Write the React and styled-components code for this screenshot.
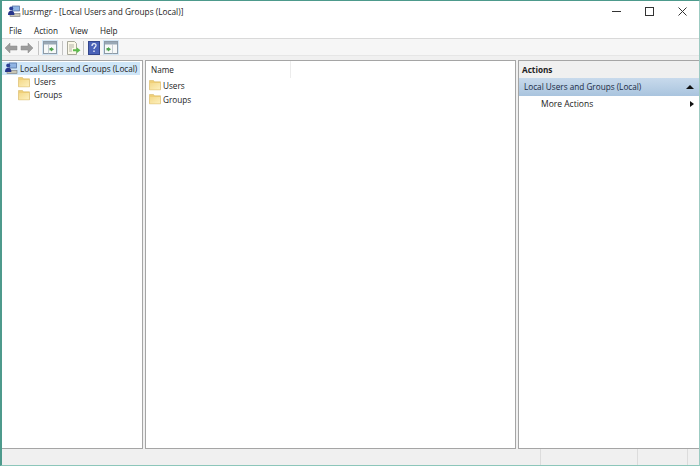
import React from "react";
import styled, { createGlobalStyle } from "styled-components";

const GlobalStyle = createGlobalStyle`
  * {
    box-sizing: border-box;
  }
  html, body {
    margin: 0;
    padding: 0;
    background: #f0f0f0;
  }
  body {
    font-family: "Open Sans", "Noto Sans", sans-serif;
    font-size: 8.2px;
    color: #222;
  }
`;

const Win = styled.div`
  width: 700px;
  height: 466px;
  display: flex;
  flex-direction: column;
  border: 1px solid #4d9a8c;
  border-right-color: #9ccbc2;
  border-left-width: 2px;
  border-bottom-color: #8cc6ba;
  background: #f0f0f0;
  overflow: hidden;
`;

const TitleBar = styled.div`
  height: 21px;
  flex: none;
  display: flex;
  align-items: center;
  padding-left: 5px;
  background: #fff;
`;

const TitleText = styled.span`
  margin-left: 1px;
  flex: 1;
  font-size: 8.3px;
`;

const WinButton = styled.div`
  width: 33px;
  height: 21px;
  display: flex;
  align-items: center;
  justify-content: center;
`;

const MenuBar = styled.div`
  height: 16px;
  flex: none;
  display: flex;
  align-items: center;
  gap: 12px;
  padding-left: 7px;
  background: #fff;
`;

const ToolBar = styled.div`
  height: 18px;
  flex: none;
  display: flex;
  align-items: center;
  padding: 1px 0 0 1px;
  background: #f6f6f6;
  border-top: 1px solid #d9d9d9;
  border-bottom: 1px solid #e6e6e6;
`;

const ToolButton = styled.div`
  width: 16px;
  height: 15px;
  display: flex;
  align-items: center;
  justify-content: center;
  margin-left: ${(p) => p.$ml || 0}px;
  background: ${(p) => (p.$on ? "#d3e6f5" : "transparent")};
`;

const ToolSep = styled.div`
  width: 1px;
  height: 14px;
  background: #c4c4c4;
  margin: 0 ${(p) => p.$r}px 0 ${(p) => p.$l}px;
`;

const Panes = styled.div`
  flex: 1;
  min-height: 0;
  display: flex;
  gap: 2px;
  padding-top: 4px;
`;

const Pane = styled.div`
  width: ${(p) => p.$w}px;
  flex: ${(p) => (p.$grow ? 1 : "none")};
  background: #fff;
  border: 1px solid #a5a5a5;
  border-left-width: ${(p) => (p.$noLeft ? 0 : 1)}px;
  border-right-width: ${(p) => (p.$noRight ? 0 : 1)}px;
  overflow: hidden;
`;

const TreeRoot = styled.div`
  display: flex;
  align-items: center;
  height: 13px;
  margin-top: 1px;
  padding-left: 2px;
  background: #cfe6f8;
  gap: 2px;
  width: 138px;
  white-space: nowrap;
`;

const TreeItem = styled.div`
  display: flex;
  align-items: center;
  height: 13px;
  padding-left: 16px;
  gap: 4px;
`;

const ListHead = styled.div`
  height: 17px;
  display: flex;
  align-items: center;
`;

const HeadCell = styled.div`
  width: 145px;
  height: 17px;
  padding-left: 5px;
  line-height: 18px;
  border-right: 1px solid #ececec;
`;

const ListRow = styled.div`
  display: flex;
  align-items: center;
  height: 14px;
  padding-left: 3px;
  gap: 2px;
`;

const ActionsTitle = styled.div`
  height: 17px;
  display: flex;
  align-items: center;
  padding-left: 3px;
  font-weight: 700;
  background: #f0f0f0;
`;

const ActionsGroup = styled.div`
  height: 18px;
  display: flex;
  align-items: center;
  justify-content: space-between;
  padding: 0 5px 1px;
  color: #1a2a44;
  background: linear-gradient(#c8daec, #a9c4de);
`;

const ActionsRow = styled.div`
  height: 16px;
  display: flex;
  align-items: center;
  justify-content: space-between;
  padding: 0 5px 1px 22px;
  font-size: 8.5px;
`;

const Tri = styled.span`
  width: 0;
  height: 0;
  border-style: solid;
  border-color: transparent;
  ${(p) =>
    p.$up
      ? "border-width: 0 4px 4px 4px; border-bottom-color: #111;"
      : "border-width: 3.5px 0 3.5px 4px; border-left-color: #111;"}
`;

const StatusBar = styled.div`
  height: 16px;
  flex: none;
  display: flex;
  justify-content: flex-end;
  background: #f0f0f0;
`;

const StatusCell = styled.div`
  width: ${(p) => p.$w}px;
  border-left: 1px solid #dcdcdc;
`;

const Folder = () => (
  <svg width="12" height="12" viewBox="0 0 12 12">
    <defs>
      <linearGradient id="folderFill" x1="0" y1="0" x2="1" y2="1">
        <stop offset="0" stopColor="#f4d98a" />
        <stop offset="1" stopColor="#fdf0bd" />
      </linearGradient>
    </defs>
    <path d="M0.5 1.5h4l1 1.3h6v8h-11z" fill="#efcf78" stroke="#d9bb6c" strokeWidth="0.6" />
    <path d="M1 4h10v6.4h-10z" fill="url(#folderFill)" />
  </svg>
);

const RootIcon = () => (
  <svg width="14" height="13" viewBox="0 0 14 13">
    <rect x="5.5" y="1" width="7" height="5" fill="#8fb4e4" stroke="#4f6a9c" strokeWidth="0.7" />
    <rect x="3" y="8.5" width="10" height="3" fill="#c9c6b4" stroke="#77797a" strokeWidth="0.6" />
    <circle cx="4.2" cy="3.6" r="2" fill="#2b3f96" />
    <path d="M1 10c0-2.8 1.2-4.2 3.2-4.2s3.2 1.4 3.2 4.2z" fill="#25358a" />
  </svg>
);

const ToolPanel = ({ side }) => (
  <svg width="14" height="13" viewBox="0 0 14 13">
    <rect x="0.5" y="0.5" width="13" height="12" fill="#f6f8f8" stroke="#8d9aa6" />
    <rect x="1" y="1" width="12" height="2.5" fill="#98a8b6" />
    <path d={side === "left" ? "M5.5 3.5v9" : "M8.5 3.5v9"} stroke="#b9c3cc" strokeWidth="0.8" />
    <path d={side === "left" ? "M8 6l3 2.2-3 2.2z" : "M4 6l3 2.2-3 2.2z"} fill="#4fa34f" />
    <rect x={side === "left" ? 6.5 : 2.5} y="7" width="2" height="2.4" fill="#4fa34f" />
  </svg>
);

const ArrowIcon = ({ flip }) => (
  <svg width="14" height="12" viewBox="0 0 14 12" style={flip ? { transform: "scaleX(-1)" } : undefined}>
    <path d="M1 6l5-5v3h7v4h-7v3z" fill="#9c9c9c" stroke="#8a8a8a" strokeWidth="0.5" />
  </svg>
);

const ExportIcon = () => (
  <svg width="15" height="14" viewBox="0 0 15 14">
    <path d="M1.5 0.5h7l2 2v11h-9z" fill="#fbf8e8" stroke="#a8a89a" />
    <path d="M3 4h5M3 6h5M3 8h3M3 10h3" stroke="#9a9a8e" strokeWidth="0.7" />
    <path d="M7 8.2h3.6v-2l3.9 3-3.9 3v-2h-3.6z" fill="#5dbb4c" />
  </svg>
);

const HelpIcon = () => (
  <svg width="12" height="14" viewBox="0 0 12 14">
    <rect x="0.5" y="0.5" width="11" height="13" fill="#4a62b8" stroke="#33468c" />
    <path d="M4 5c0-3 4-3 4-.6 0 1.6-2 1.6-2 3.6" stroke="#e8ecf8" fill="none" strokeWidth="1.3" />
    <rect x="5.3" y="9.5" width="1.4" height="1.5" fill="#e8ecf8" />
  </svg>
);

const WinGlyph = ({ type }) => (
  <svg width="9" height="9" viewBox="0 0 9 9" fill="none" stroke="#333" strokeWidth="1">
    {type === "min" && <path d="M0 4.5h9" />}
    {type === "max" && <rect x="0.5" y="0.5" width="8" height="8" />}
    {type === "close" && <path d="M0.5 0.5l8 8M8.5 0.5l-8 8" />}
  </svg>
);

export default function App() {
  return (
    <>
      <GlobalStyle />
      <Win>
        <TitleBar>
          <RootIcon />
          <TitleText>lusrmgr - [Local Users and Groups (Local)]</TitleText>
          <WinButton><WinGlyph type="min" /></WinButton>
          <WinButton><WinGlyph type="max" /></WinButton>
          <WinButton><WinGlyph type="close" /></WinButton>
        </TitleBar>
        <MenuBar>
          <span>File</span>
          <span>Action</span>
          <span>View</span>
          <span>Help</span>
        </MenuBar>
        <ToolBar>
          <ToolButton><ArrowIcon /></ToolButton>
          <ToolButton><ArrowIcon flip /></ToolButton>
          <ToolSep $l={3} $r={3} />
          <ToolButton $on><ToolPanel side="left" /></ToolButton>
          <ToolSep $l={4} $r={2} />
          <ToolButton><ExportIcon /></ToolButton>
          <ToolSep $l={2} $r={2} />
          <ToolButton><HelpIcon /></ToolButton>
          <ToolButton $on $ml={1}><ToolPanel side="right" /></ToolButton>
        </ToolBar>
        <Panes>
          <Pane $w={141} $noLeft>
            <TreeRoot>
              <RootIcon />
              <span>Local Users and Groups (Local)</span>
            </TreeRoot>
            <TreeItem><Folder /><span>Users</span></TreeItem>
            <TreeItem><Folder /><span>Groups</span></TreeItem>
          </Pane>
          <Pane $grow>
            <ListHead><HeadCell>Name</HeadCell></ListHead>
            <ListRow><Folder /><span>Users</span></ListRow>
            <ListRow><Folder /><span>Groups</span></ListRow>
          </Pane>
          <Pane $w={181} $noRight>
            <ActionsTitle>Actions</ActionsTitle>
            <ActionsGroup>
              <span>Local Users and Groups (Local)</span>
              <Tri $up />
            </ActionsGroup>
            <ActionsRow>
              <span>More Actions</span>
              <Tri />
            </ActionsRow>
          </Pane>
        </Panes>
        <StatusBar>
          <StatusCell $w={97} />
          <StatusCell $w={50} />
          <StatusCell $w={12} />
        </StatusBar>
      </Win>
    </>
  );
}
